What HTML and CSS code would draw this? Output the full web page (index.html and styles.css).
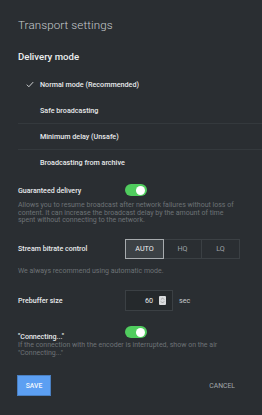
FILE: index.html
```html
<!DOCTYPE html>
<html lang="en">
<head>
  <meta charset="UTF-8">
  <meta name="viewport" content="width=device-width, initial-scale=1">
  <title>Transport settings</title>
  <link rel="stylesheet" href="styles.css">
</head>
<body>
  <div class="panel">
    <h1 class="title">Transport settings</h1>

    <!-- Delivery mode -->
    <h2 class="section-title">Delivery mode</h2>
    <ul class="mode-list">
      <li class="mode-item selected">
        <svg class="check" viewBox="0 0 10 8" width="8" height="7"><path d="M1 4.2 L3.6 6.8 L9 1" fill="none" stroke="#e6e8ea" stroke-width="1.1"/></svg>
        Normal mode (Recommended)
      </li>
      <li class="mode-item divided">Safe broadcasting</li>
      <li class="mode-item divided">Minimum delay (Unsafe)</li>
      <li class="mode-item">Broadcasting from archive</li>
    </ul>

    <!-- Guaranteed delivery -->
    <div class="row row-guaranteed">
      <div class="label">Guaranteed delivery</div>
      <div class="toggle on"><span class="knob"></span></div>
    </div>
    <p class="hint">Allows you to resume broadcast after network failures without loss of content. It can increase the broadcast delay by the amount of time spent without connecting to the network.</p>

    <!-- Bitrate -->
    <div class="row row-bitrate">
      <div class="label">Stream bitrate control</div>
      <div class="seg">
        <button class="seg-btn active">AUTO</button>
        <button class="seg-btn">HQ</button>
        <button class="seg-btn">LQ</button>
      </div>
    </div>
    <p class="hint hint-bitrate">We always recommend using automatic mode.</p>

    <!-- Prebuffer -->
    <div class="row row-prebuffer">
      <div class="label">Prebuffer size</div>
      <div class="number-input">
        <span class="value">60</span>
        <span class="spinner">
          <svg viewBox="0 0 6 8" width="5" height="7"><path d="M1 3 L3 1 L5 3 M1 5 L3 7 L5 5" fill="none" stroke="#888" stroke-width="0.8"/></svg>
        </span>
      </div>
      <span class="unit">sec</span>
    </div>

    <!-- Connecting -->
    <div class="row row-connecting">
      <div class="label">"Connecting..."</div>
      <div class="toggle on"><span class="knob"></span></div>
    </div>
    <p class="hint hint-connecting">If the connection with the encoder is interrupted, show on the air "Connecting..."</p>

    <div class="actions">
      <button class="btn-save">SAVE</button>
      <button class="btn-cancel">CANCEL</button>
    </div>
  </div>
</body>
</html>
```

FILE: styles.css
```css
body { margin: 0; background: #2a2e32; font-family: Roboto, 'Liberation Sans', sans-serif; color: #e8eaec; min-height: 100vh; }
.panel { padding: 18px 20px 0 18px; }
.title { margin: 0; font-size: 11.6px; line-height: 14px; font-weight: 300; color: #c6cacd; letter-spacing: 0.1px; }
.section-title { margin: 19px 0 0; font-size: 9.6px; line-height: 12px; font-weight: 500; color: #eceef0; }

.mode-list { list-style: none; margin: 9px -20px 0 0; padding: 0; }
.mode-item { position: relative; height: 26px; line-height: 26px; padding-left: 22px; font-size: 7.2px; font-weight: 500; color: #e8eaec; }
.mode-item.divided { border-bottom: 1px solid #34393d; height: 25px; }
.mode-item.divided + .mode-item { line-height: 25px; }
.check { position: absolute; left: 8px; top: 9px; }

.row { display: flex; align-items: center; }
.label { width: 107px; flex: none; font-size: 7.1px; font-weight: 500; color: #e8eaec; }
.row-guaranteed { margin-top: 8px; height: 12px; }
.row-bitrate { margin-top: 14px; height: 20px; }
.row-prebuffer { margin-top: 15px; height: 21px; }
.row-connecting { margin-top: 15px; height: 12px; align-items: flex-start; }
.row-connecting .label { margin-top: 6px; }

.hint { margin: 6px 0 0; font-size: 7px; line-height: 7.5px; color: #6d7276; }
.hint-bitrate { margin-top: 9px; }
.hint-connecting { margin-top: 4px; }

.toggle { position: relative; width: 22px; height: 12px; border-radius: 6px; background: #50cc5e; }
.knob { position: absolute; top: 1.5px; right: 2px; width: 9px; height: 9px; border-radius: 50%; background: #fff; }

.seg { display: flex; }
.seg-btn { width: 39px; height: 20px; margin: 0; padding: 0; border: 1px solid #3b4044; margin-left: -1px; background: transparent; color: #9ea3a7; font-family: inherit; font-size: 7.2px; font-weight: 400; }
.seg-btn:first-child { margin-left: 0; }
.seg-btn.active { background: #3c4145; border-color: #a7abae; color: #eef0f2; position: relative; }

.number-input { display: flex; align-items: center; justify-content: flex-end; width: 48px; height: 21px; box-sizing: border-box; border: 1px solid #3b4044; background: #25292c; padding-right: 6px; }
.value { font-size: 7.2px; color: #e8eaec; margin-right: 6px; }
.spinner { display: flex; align-items: center; justify-content: center; width: 7px; height: 9px; background: #d9dbdd; border-radius: 1px; }
.unit { margin-left: 6px; font-size: 7.2px; color: #c7cbce; }

.actions { display: flex; justify-content: space-between; align-items: center; margin: 18px 7px 0 -1px; }
.btn-save { width: 34px; height: 21px; padding: 0; border: 1px solid #4a7fc0; background: #5c9ff2; color: #f3f7fd; font-family: inherit; font-size: 6.8px; font-weight: 500; }
.btn-cancel { padding: 0; border: none; background: transparent; color: #a3a8ac; font-family: inherit; font-size: 6.8px; font-weight: 400; }
```
